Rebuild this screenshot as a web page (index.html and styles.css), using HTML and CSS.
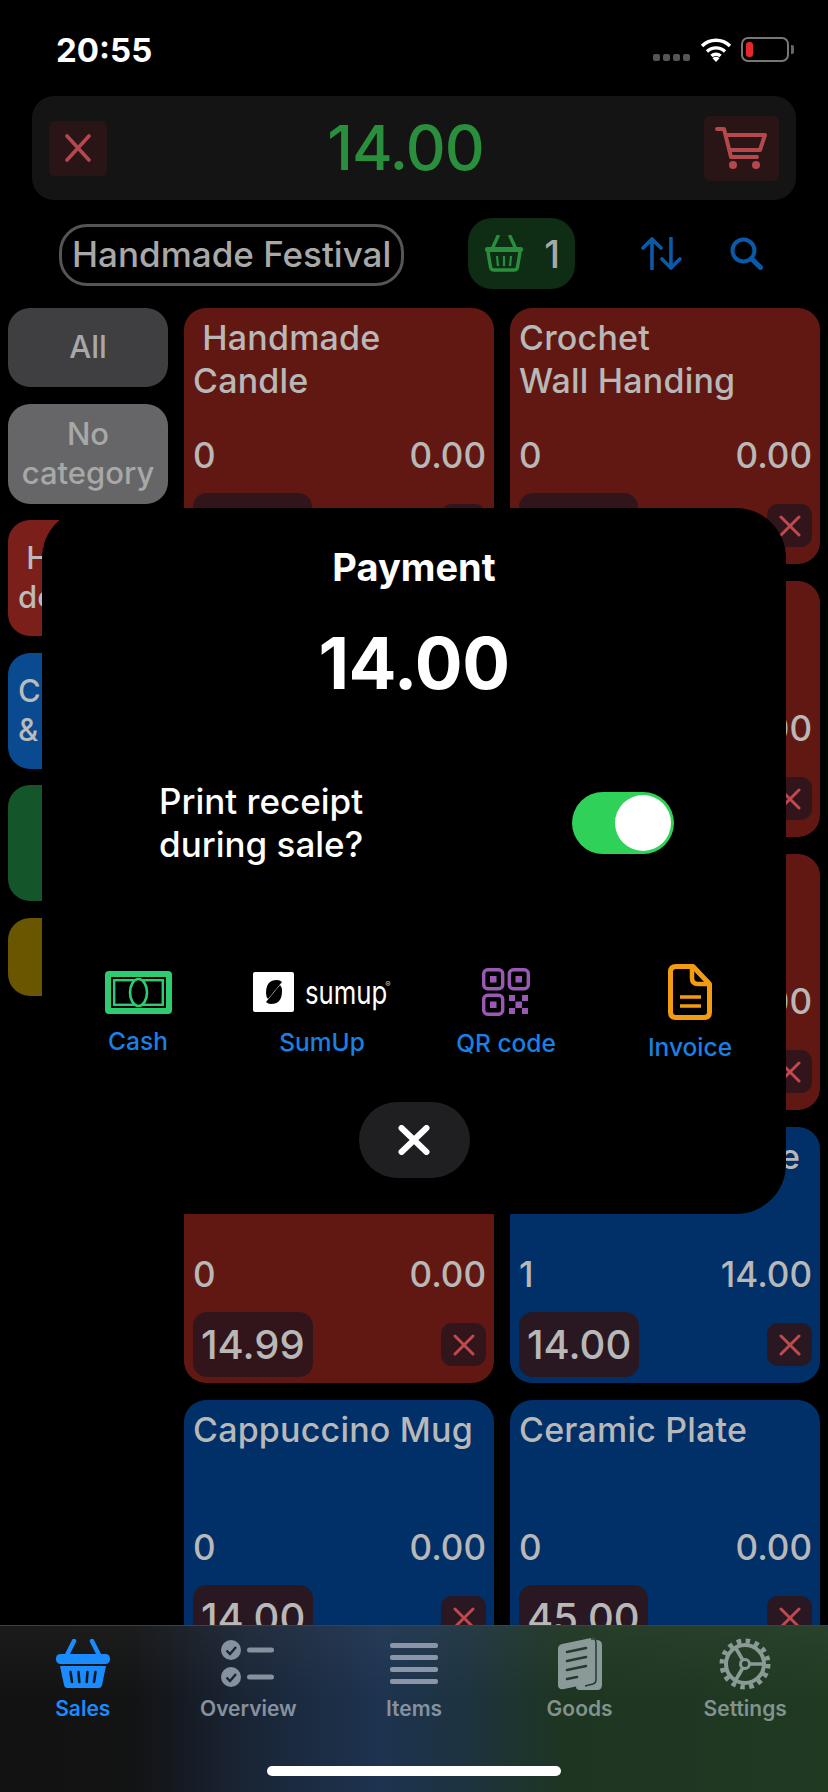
FILE: index.html
```html
<!DOCTYPE html>
<html lang="en">
<head>
    <meta charset="UTF-8">
    <meta name="viewport" content="width=device-width, initial-scale=1.0">
    <title>Sales</title>
    <link rel="stylesheet" href="styles.css">
</head>
<body>
    <div class="screen">
        <div class="statusbar">
            <span class="time">20:55</span>
            <div class="status-icons">
                <div class="signal"><i></i><i></i><i></i><i></i></div>
                <svg class="wifi" width="32" height="25" viewBox="0 0 32 25">
                    <path d="M2 9a20 20 0 0 1 28 0M7 14.500a13 13 0 0 1 18 0M11.500 19a6.500 6.500 0 0 1 9 0" fill="none" stroke="#fff" stroke-width="3.400"/>
                    <path d="M16 25l-3.500-3.800a5 5 0 0 1 7 0z" fill="#fff"/>
                </svg>
                <div class="battery"><i></i></div>
                <div class="battery-tip"></div>
            </div>
        </div>

        <div class="totalbar">
            <button class="total-btn total-clear">
                <svg width="28" height="28" viewBox="0 0 28 28"><path d="M3 2l22 24M25 2L3 26" fill="none" stroke="#b5474f" stroke-width="3.600" stroke-linecap="round"/></svg>
            </button>
            <span class="total-amount">14.00</span>
            <button class="total-btn total-cart">
                <svg width="52" height="44" viewBox="0 0 52 44">
                    <path d="M2 3h7l7 28h26M11 9h39l-5 15H15" fill="none" stroke="#b5484c" stroke-width="4" stroke-linecap="round" stroke-linejoin="round"/>
                    <circle cx="18" cy="39" r="4" fill="#b5484c"/>
                    <circle cx="41" cy="39" r="4" fill="#b5484c"/>
                </svg>
            </button>
        </div>

        <div class="toolbar">
            <div class="event-pill">Handmade Festival</div>
            <div class="basket-btn">
                <svg width="40" height="37" viewBox="0 0 40 37">
                    <path d="M14 1l-5 11M26 1l5 11" fill="none" stroke="#2a8f3c" stroke-width="3.400" stroke-linecap="round"/>
                    <rect x="1" y="12" width="38" height="5" rx="2" fill="#2a8f3c"/>
                    <path d="M4 17l2.500 15q.5 3 3.500 3h20q3 0 3.500-3L36 17" fill="none" stroke="#2a8f3c" stroke-width="3.400"/>
                    <path d="M13 21l1 10M20 21v10M27 21l-1 10" fill="none" stroke="#2a8f3c" stroke-width="2.200"/>
                </svg>
                <span class="basket-count">1</span>
            </div>
            <svg class="sort-icon" width="41" height="33" viewBox="0 0 41 33">
                <path d="M11 32V2M2 11l9-9 9 9M30 1v30M21 22l9 9 9-9" fill="none" stroke="#0a5aa8" stroke-width="3.600" stroke-linecap="round" stroke-linejoin="round"/>
            </svg>
            <svg class="search-icon" width="33" height="33" viewBox="0 0 33 33">
                <circle cx="13.500" cy="13.500" r="11" fill="none" stroke="#0a5aa8" stroke-width="4"/>
                <path d="M21.500 21.500l9 9" fill="none" stroke="#0a5aa8" stroke-width="5" stroke-linecap="round"/>
            </svg>
        </div>

        <div class="main">
            <div class="categories">
                <div class="cat cat-all">All</div>
                <div class="cat cat-none">No category</div>
                <div class="cat cat-text cat-red">&nbsp;Handmade<br>decor</div>
                <div class="cat cat-text cat-blue">Ceramics<br>&amp; mugs</div>
                <div class="cat cat-text cat-green"></div>
                <div class="cat cat-text cat-yellow"></div>
            </div>

            <div class="products">
                <div class="card card-red">
                    <div class="card-title">&nbsp;Handmade<br>Candle</div>
                    <div class="card-stats"><span>0</span><span>0.00</span></div>
                    <div class="card-bottom"><span class="price price-empty"></span><span class="remove"><svg width="22" height="22" viewBox="0 0 22 22"><path d="M2 2l18 18M20 2L2 20"/></svg></span></div>
                </div>
                <div class="card card-red">
                    <div class="card-title">Crochet<br>Wall Handing</div>
                    <div class="card-stats"><span>0</span><span>0.00</span></div>
                    <div class="card-bottom"><span class="price price-empty"></span><span class="remove"><svg width="22" height="22" viewBox="0 0 22 22"><path d="M2 2l18 18M20 2L2 20"/></svg></span></div>
                </div>
                <div class="card card-red"></div>
                <div class="card card-red">
                    <div class="card-title"></div>
                    <div class="card-stats card-stats-end"><span>0.00</span></div>
                    <div class="card-bottom"><span class="price price-empty"></span><span class="remove"><svg width="22" height="22" viewBox="0 0 22 22"><path d="M2 2l18 18M20 2L2 20"/></svg></span></div>
                </div>
                <div class="card card-red"></div>
                <div class="card card-red">
                    <div class="card-title"></div>
                    <div class="card-stats card-stats-end"><span>0.00</span></div>
                    <div class="card-bottom"><span class="price price-empty"></span><span class="remove"><svg width="22" height="22" viewBox="0 0 22 22"><path d="M2 2l18 18M20 2L2 20"/></svg></span></div>
                </div>
                <div class="card card-red">
                    <div class="card-title"></div>
                    <div class="card-stats"><span>0</span><span>0.00</span></div>
                    <div class="card-bottom"><span class="price">14.99</span><span class="remove"><svg width="22" height="22" viewBox="0 0 22 22"><path d="M2 2l18 18M20 2L2 20"/></svg></span></div>
                </div>
                <div class="card card-blue">
                    <div class="card-title">Ceramic Oil Plate</div>
                    <div class="card-stats"><span>1</span><span>14.00</span></div>
                    <div class="card-bottom"><span class="price">14.00</span><span class="remove"><svg width="22" height="22" viewBox="0 0 22 22"><path d="M2 2l18 18M20 2L2 20"/></svg></span></div>
                </div>
                <div class="card card-blue">
                    <div class="card-title">Cappuccino Mug</div>
                    <div class="card-stats"><span>0</span><span>0.00</span></div>
                    <div class="card-bottom"><span class="price">14.00</span><span class="remove"><svg width="22" height="22" viewBox="0 0 22 22"><path d="M2 2l18 18M20 2L2 20"/></svg></span></div>
                </div>
                <div class="card card-blue">
                    <div class="card-title">Ceramic Plate</div>
                    <div class="card-stats"><span>0</span><span>0.00</span></div>
                    <div class="card-bottom"><span class="price">45.00</span><span class="remove"><svg width="22" height="22" viewBox="0 0 22 22"><path d="M2 2l18 18M20 2L2 20"/></svg></span></div>
                </div>
            </div>
        </div>

        <div class="tabbar">
            <div class="tab tab-active">
                <div class="tab-icon">
                    <svg width="54" height="50" viewBox="0 0 54 50">
                        <path d="M18 2l-7 14M36 2l7 14" fill="none" stroke="#1a8cff" stroke-width="4.500" stroke-linecap="round"/>
                        <rect y="15" width="54" height="10" rx="4.500" fill="#1a8cff"/>
                        <path d="M4 27h46l-4 19q-.6 3-3.500 3h-31q-2.900 0-3.500-3z" fill="#1a8cff"/>
                        <path d="M14.500 33l1.500 10M22.500 33l.8 10M31.500 33l-.8 10M39.500 33l-1.500 10" fill="none" stroke="#101820" stroke-width="2.600" stroke-linecap="round"/>
                    </svg>
                </div>
                <span class="tab-label">Sales</span>
            </div>
            <div class="tab">
                <div class="tab-icon">
                    <svg width="54" height="47" viewBox="0 0 54 47">
                        <circle cx="10" cy="10" r="10" fill="#8691a0"/>
                        <circle cx="10" cy="37" r="10" fill="#8691a0"/>
                        <path d="M5.500 10.500l3.500 3.500 6-7M5.500 37.500l3.500 3.500 6-7" fill="none" stroke="#1b2430" stroke-width="2.400"/>
                        <rect x="26" y="7.500" width="27" height="5" rx="2.500" fill="#8691a0"/>
                        <rect x="26" y="34.500" width="27" height="5" rx="2.500" fill="#8691a0"/>
                    </svg>
                </div>
                <span class="tab-label">Overview</span>
            </div>
            <div class="tab">
                <div class="tab-icon">
                    <svg width="48" height="41" viewBox="0 0 48 41">
                        <rect width="48" height="5" rx="2" fill="#8a96a8"/>
                        <rect y="12" width="48" height="5" rx="2" fill="#8a96a8"/>
                        <rect y="24" width="48" height="5" rx="2" fill="#8a96a8"/>
                        <rect y="36" width="48" height="5" rx="2" fill="#8a96a8"/>
                    </svg>
                </div>
                <span class="tab-label">Items</span>
            </div>
            <div class="tab">
                <div class="tab-icon">
                    <svg width="44" height="53" viewBox="0 0 44 53">
                        <path d="M38 3q6 0 6 5v40q0 5-5 5H22q-4 0-4-3z" fill="#8a9a98"/>
                        <path d="M4 7L33 1q5-1 5 4v37q0 3-3 4L6 52q-6 1-6-4V12q0-4 4-5z" fill="#8a9a98"/>
                        <path d="M33 2q5-1 5 4v37q0 3-3 4l-8 2" fill="none" stroke="#27392f" stroke-width="1.500"/>
                        <path d="M9 15l19-4M9 24l19-4M9 33l19-4M9 42l10-2" fill="none" stroke="#27392f" stroke-width="2.600" stroke-linecap="round"/>
                    </svg>
                </div>
                <span class="tab-label">Goods</span>
            </div>
            <div class="tab">
                <div class="tab-icon">
                    <svg width="52" height="52" viewBox="0 0 52 52">
                        <circle cx="26" cy="26" r="23" fill="none" stroke="#8a9a94" stroke-width="5" stroke-dasharray="4.500 4.530"/>
                        <circle cx="26" cy="26" r="19" fill="none" stroke="#8a9a94" stroke-width="4"/>
                        <circle cx="26" cy="26" r="4.500" fill="none" stroke="#8a9a94" stroke-width="3"/>
                        <path d="M30.500 26H45M23.700 22l-7.500-13M23.700 30l-7.500 13" fill="none" stroke="#8a9a94" stroke-width="3.600"/>
                    </svg>
                </div>
                <span class="tab-label">Settings</span>
            </div>
            <div class="home-indicator"></div>
        </div>

        <div class="modal">
            <div class="modal-title">Payment</div>
            <div class="modal-amount">14.00</div>
            <div class="receipt-row">
                <div class="receipt-text">Print receipt<br>during sale?</div>
                <div class="switch"><div class="switch-knob"></div></div>
            </div>
            <div class="methods">
                <div class="method">
                    <div class="method-icon">
                        <svg width="67" height="43" viewBox="0 0 67 43">
                            <rect x="3" y="3" width="61" height="37" rx="1" fill="none" stroke="#2ecc71" stroke-width="6"/>
                            <rect x="9.200" y="9.200" width="48.600" height="24.600" fill="none" stroke="#2ecc71" stroke-width="2.400"/>
                            <ellipse cx="33.500" cy="21.500" rx="8.500" ry="13.500" fill="#000" stroke="#2ecc71" stroke-width="2.600"/>
                        </svg>
                    </div>
                    <span class="method-label">Cash</span>
                </div>
                <div class="method">
                    <div class="method-icon">
                        <div class="sumup-logo">
                            <div class="sumup-mark">
                                <svg width="18" height="26" viewBox="0 0 18 26">
                                    <path d="M1 14Q1 1 12 1q3 0 5 2L3 20q-2-2-2-6z" fill="#000"/>
                                    <path d="M17 12q0 13-11 13-3 0-5-2L15 6q2 2 2 6z" fill="#000"/>
                                </svg>
                            </div>
                            <span class="sumup-word">sumup</span>
                            <span class="sumup-reg">®</span>
                        </div>
                    </div>
                    <span class="method-label method-label-sumup">SumUp</span>
                </div>
                <div class="method">
                    <div class="method-icon">
                        <svg width="48" height="48" viewBox="0 0 48 48">
                            <g fill="none" stroke="#9b59b6" stroke-width="3.400">
                                <rect x="1.700" y="1.700" width="19" height="19" rx="4"/>
                                <rect x="27.300" y="1.700" width="19" height="19" rx="4"/>
                                <rect x="1.700" y="27.300" width="19" height="19" rx="4"/>
                            </g>
                            <g fill="#9b59b6">
                                <rect x="8" y="8" width="6.500" height="6.500"/>
                                <rect x="33.500" y="8" width="6.500" height="6.500"/>
                                <rect x="8" y="33.500" width="6.500" height="6.500"/>
                                <rect x="27" y="27" width="6" height="6"/>
                                <rect x="40" y="27" width="6" height="6"/>
                                <rect x="33.500" y="33.500" width="6.500" height="6.500"/>
                                <rect x="27" y="40" width="6" height="6"/>
                                <rect x="40" y="40" width="6" height="6"/>
                            </g>
                        </svg>
                    </div>
                    <span class="method-label method-label-qr">QR code</span>
                </div>
                <div class="method">
                    <div class="method-icon">
                        <svg width="44" height="56" viewBox="0 0 44 56">
                            <path d="M8 2.500h17l16.500 17.500v28q0 5.500-5.500 5.500H8q-5.500 0-5.500-5.500V8Q2.500 2.500 8 2.500z" fill="none" stroke="#f39c12" stroke-width="5" stroke-linejoin="round"/>
                            <path d="M24 3v11q0 6 6 6h11" fill="none" stroke="#f39c12" stroke-width="4.500"/>
                            <path d="M12 33h21M12 42h21" fill="none" stroke="#f39c12" stroke-width="3.400"/>
                        </svg>
                    </div>
                    <span class="method-label method-label-invoice">Invoice</span>
                </div>
            </div>
            <button class="modal-close">
                <svg width="32" height="30" viewBox="0 0 32 30"><path d="M3.500 3l25 24M28.500 3l-25 24" fill="none" stroke="#fff" stroke-width="6" stroke-linecap="round"/></svg>
            </button>
        </div>
    </div>
</body>
</html>
```

FILE: styles.css
```css
* { box-sizing: border-box; }
body { margin: 0; background: #000; font-family: Inter, "Noto Sans", Arial, sans-serif; }
button { border: none; padding: 0; font-family: inherit; }

.screen { position: relative; width: 828px; height: 1792px; overflow: hidden; background: #000; }

/* status bar */
.statusbar { height: 96px; padding: 33px 34px 0 56px; display: flex; justify-content: space-between; align-items: flex-start; }
.time { font-size: 33px; font-weight: 700; line-height: 34px; color: #fff; }
.status-icons { display: flex; align-items: flex-end; height: 26px; margin-top: 3px; }
.signal { display: flex; gap: 3px; margin-right: 10px; margin-bottom: 1px; }
.signal i { width: 7px; height: 7px; border-radius: 2px; background: #555; }
.wifi { margin-right: 9px; }
.battery { width: 48px; height: 25px; border: 2px solid #777; border-radius: 7px; padding: 3px; }
.battery i { display: block; width: 7px; height: 100%; border-radius: 3px; background: #e8272c; }
.battery-tip { width: 3px; height: 9px; margin: 0 0 8px 2px; border-radius: 0 2px 2px 0; background: #666; }

/* total bar */
.totalbar { height: 104px; margin: 0 32px; padding: 0 17px 0 17px; border-radius: 22px; background: #141414; display: flex; align-items: center; justify-content: space-between; }
.total-btn { display: flex; align-items: center; justify-content: center; border-radius: 6px; background: #2a1516; }
.total-clear { width: 58px; height: 55px; }
.total-cart { width: 75px; height: 65px; }
.total-amount { font-size: 62px; font-weight: 500; line-height: 64px; letter-spacing: -1px; color: #2a8f3c; }

/* toolbar */
.toolbar { height: 71px; margin: 18px 0 19px; padding: 0 65px 0 59px; display: flex; align-items: center; }
.event-pill { width: 346px; height: 62px; margin-top: 3px; border: 3px solid #555; border-radius: 28px; text-align: center; font-size: 35px; font-weight: 500; line-height: 54px; color: #a8a8a8; white-space: nowrap; }
.basket-btn { width: 107px; height: 71px; margin-left: 64px; padding-left: 16px; border-radius: 24px; background: #0f2c14; display: flex; align-items: center; gap: 20px; }
.basket-count { font-size: 38px; font-weight: 500; color: #a8a8a8; }
.sort-icon { margin-left: 66px; }
.search-icon { margin-left: 48px; }

/* main area */
.main { padding: 0 8px; display: flex; gap: 16px; align-items: flex-start; }
.categories { width: 160px; flex-shrink: 0; display: flex; flex-direction: column; gap: 16.500px; }
.cat { padding-bottom: 2px; border-radius: 22px; display: flex; align-items: center; justify-content: center; text-align: center; font-size: 31px; font-weight: 500; line-height: 39px; color: #a8a8a8; }
.cat-all { height: 79px; background: #3f3f41; }
.cat-none { height: 100px; background: #666668; }
.cat-text { height: 116px; padding-left: 10px; justify-content: flex-start; text-align: left; color: #bbb; white-space: nowrap; }
.cat-red { background: #7a1f1a; }
.cat-blue { background: #0a4a90; }
.cat-green { background: #14562a; }
.cat-yellow { height: 78px; background: #6a5500; }

.products { width: 636px; display: grid; grid-template-columns: 310px 310px; grid-auto-rows: 256px; gap: 17px 16px; }
.card { padding: 8px 8px 0 9px; border-radius: 22px; color: #b8b8b8; }
.card-red { background: #621812; }
.card-blue { background: #012f68; }
.card-title { height: 119px; font-size: 34px; font-weight: 500; line-height: 43px; letter-spacing: .2px; white-space: nowrap; overflow: hidden; }
.card-stats { height: 40px; display: flex; justify-content: space-between; align-items: center; font-size: 35px; font-weight: 500; line-height: 40px; }
.card-stats-end { justify-content: flex-end; }
.card-bottom { margin-top: 18px; display: flex; justify-content: space-between; align-items: center; }
.price { height: 65px; padding: 0 8px; border-radius: 14px; background: rgba(44, 22, 28, .92); font-size: 40px; font-weight: 500; line-height: 65px; }
.price-empty { width: 119px; }
.remove { width: 45px; height: 43px; border-radius: 11px; background: rgba(44, 22, 28, .92); display: flex; align-items: center; justify-content: center; }
.remove path { fill: none; stroke: #c0494f; stroke-width: 3; stroke-linecap: round; }

/* tab bar */
.tabbar { position: absolute; left: 0; right: 0; bottom: 0; height: 167px; padding-top: 11px; border-top: 1px solid #3b4148; background: linear-gradient(180deg, rgba(255, 255, 255, .04), rgba(0, 0, 0, 0) 45%), linear-gradient(90deg, #121212 0, #121314 16%, #1a2536 30%, #1d3350 46%, #1d3340 56%, #1e3522 68%, #203a22 100%); display: grid; grid-template-columns: repeat(5, 1fr); align-items: start; }
.tab { display: flex; flex-direction: column; align-items: center; color: #8691a0; }
.tab-icon { height: 53px; display: flex; align-items: center; justify-content: center; }
.tab-label { margin-top: 7px; font-size: 21px; font-weight: 600; line-height: 24px; }
.tab-active { color: #1a8cff; }
.tab:nth-child(4), .tab:nth-child(5) { color: #82938e; }
.home-indicator { position: absolute; left: 267px; bottom: 16px; width: 294px; height: 10px; border-radius: 5px; background: #fff; }

/* payment dialog */
.modal { position: absolute; left: 42px; top: 508px; width: 744px; height: 706px; padding-top: 38px; border-radius: 50px; background: #000; color: #fff; display: flex; flex-direction: column; align-items: center; }
.modal-title { font-size: 38px; font-weight: 700; line-height: 42px; }
.modal-amount { margin-top: 37px; font-size: 71px; font-weight: 700; line-height: 76px; letter-spacing: -.5px; }
.receipt-row { width: 100%; margin-top: 79px; padding: 0 112px 0 117px; display: flex; justify-content: space-between; align-items: center; }
.receipt-text { font-size: 35px; font-weight: 500; line-height: 43px; }
.switch { width: 102px; height: 62px; padding: 3px; border-radius: 31px; background: #30d158; display: flex; justify-content: flex-end; }
.switch-knob { width: 56px; height: 56px; border-radius: 50%; background: #fff; }
.methods { width: 100%; margin-top: 98px; padding: 0 4px; display: grid; grid-template-columns: repeat(4, 1fr); }
.method { display: flex; flex-direction: column; align-items: center; }
.method-icon { height: 56px; display: flex; align-items: center; justify-content: center; }
.method-label { margin-top: 7px; font-size: 24.500px; font-weight: 500; line-height: 28px; color: #1a80e5; }
.method-label-sumup { margin-top: 8px; }
.method-label-qr { margin-top: 9px; }
.method-label-invoice { margin-top: 13px; }
.sumup-logo { display: flex; align-items: center; }
.sumup-mark { width: 41px; height: 40px; border-radius: 2px; background: #fff; display: flex; align-items: center; justify-content: center; }
.sumup-word { width: 77px; margin-left: 11px; font-size: 33px; font-weight: 400; line-height: 30px; color: #fff; transform: scaleX(.78); transform-origin: left; }
.sumup-reg { margin: -16px 0 0 3px; font-size: 8px; color: #ccc; }
.modal-close { width: 111px; height: 76px; margin-top: 41px; border-radius: 38px; background: #1f1f21; display: flex; align-items: center; justify-content: center; }
```
